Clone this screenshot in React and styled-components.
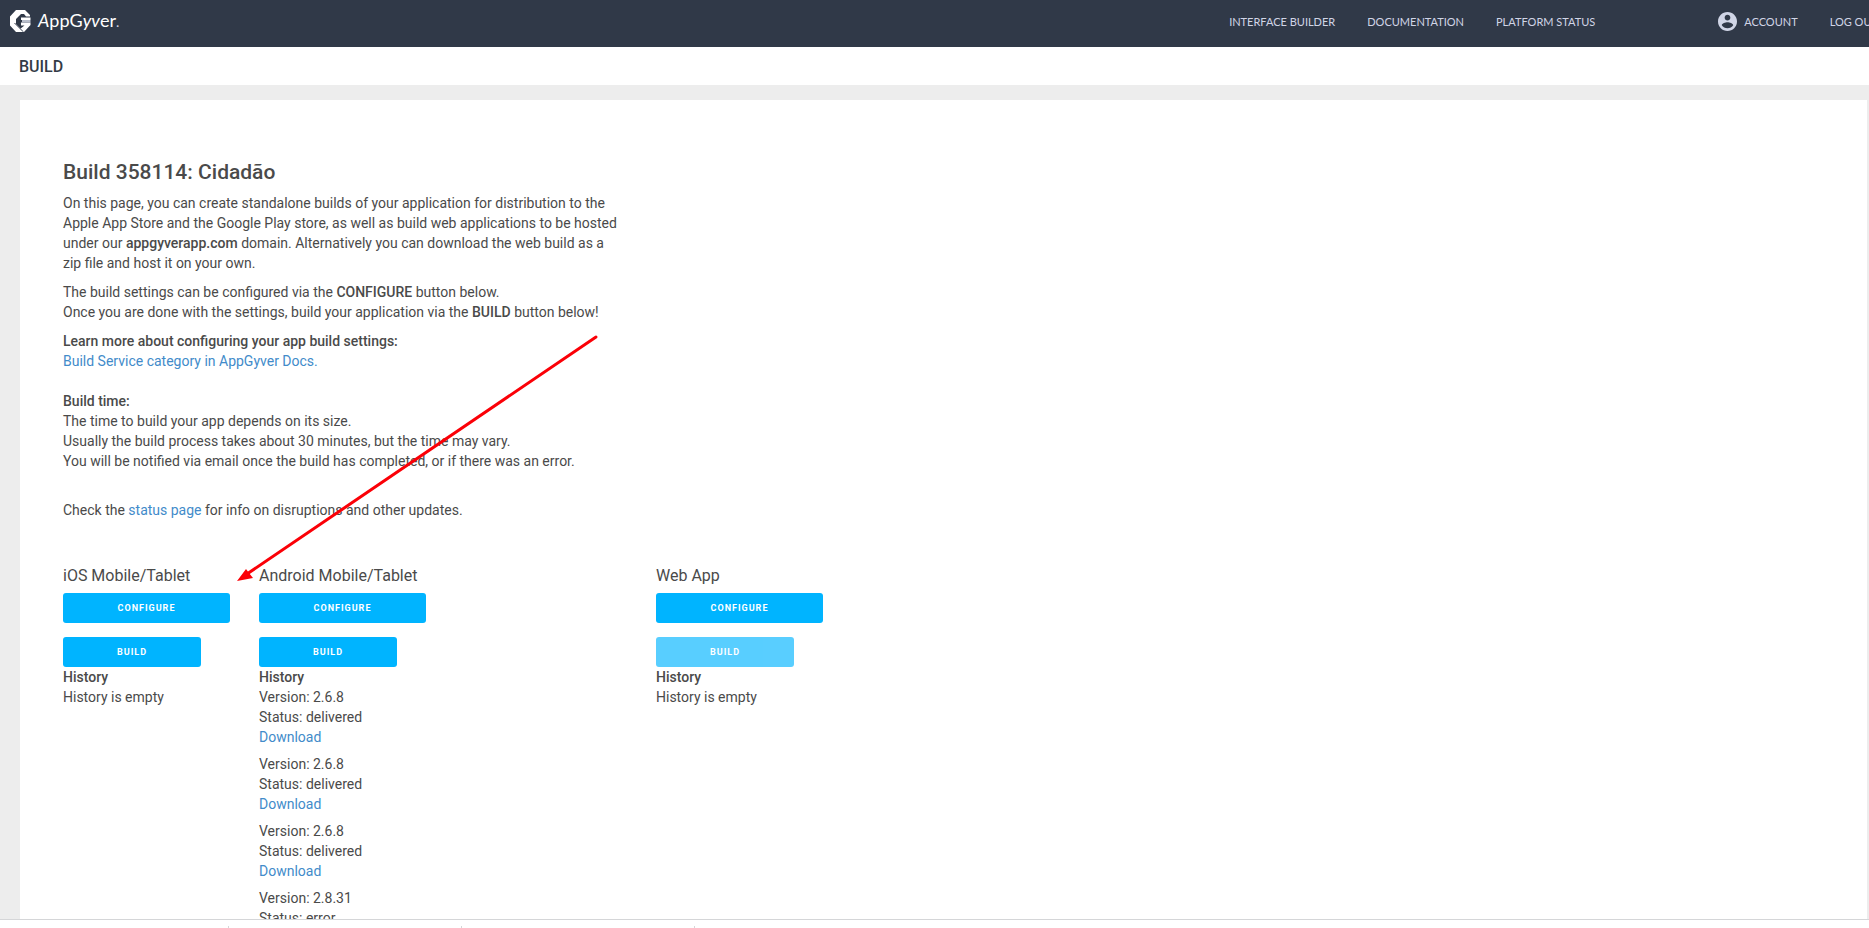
import React from 'react'
import styled, { createGlobalStyle } from 'styled-components'

const color = {
   navy: '#303948',
   nav_text: '#d0d5e6',
   title: '#333b46',
   text: '#4a4a4a',
   link: '#428bca',
   blue: '#00b4ff',
   gray_100: '#ededed',
   gray_300: '#d5d6d8',
   white: '#fff',
   red: '#fb0007',
}

const GlobalStyle = createGlobalStyle`
   * {
      box-sizing: border-box;
   }
   body {
      margin: 0;
      overflow: hidden;
      background-color: ${color.white};
      color: ${color.text};
      font-family: Roboto, Lato, sans-serif;
      font-size: 14px;
      line-height: 20px;
   }
   h1, h2, h3, p, ul {
      margin: 0;
      padding: 0;
   }
`

const Page = styled.div`
   display: flex;
   flex-direction: column;
   height: 100vh;
   overflow: hidden;
`

const Header = styled.header`
   display: flex;
   flex: none;
   justify-content: space-between;
   height: 47px;
   padding: 10px 0 0 10px;
   overflow: hidden;
   background-color: ${color.navy};
   font-family: Lato, sans-serif;
`

const Brand = styled.a`
   display: flex;
   gap: 7px;
   height: 22px;
   color: ${color.white};
   font-size: 18px;
   line-height: 20px;
   text-decoration: none;
   small {
      color: ${color.nav_text};
      font-size: 14px;
   }
`

const Nav = styled.nav`
   display: flex;
   gap: 32px;
   height: 23px;
   margin-right: -9px;
`

const NavLink = styled.a`
   display: flex;
   align-items: center;
   gap: 7px;
   margin-left: ${(props) => (props.$spaced ? '91px' : '0')};
   color: ${color.nav_text};
   font-size: 11px;
   text-decoration: none;
   text-transform: uppercase;
   white-space: nowrap;
`

const TitleBar = styled.div`
   flex: none;
   height: 38px;
   padding-left: 19px;
   h1 {
      color: ${color.title};
      font-size: 16px;
      font-weight: 500;
      line-height: 40px;
   }
`

const Content = styled.main`
   flex: 1;
   min-height: 0;
   padding: 15px 2px 0 20px;
   overflow: hidden;
   background-color: ${color.gray_100};
`

const Card = styled.section`
   position: relative;
   min-height: 100%;
   padding: 60px 43px;
   background-color: ${color.white};
`

const Heading = styled.h2`
   margin-bottom: 9px;
   font-size: 21px;
   font-weight: 500;
   line-height: 24px;
`

const Paragraph = styled.p`
   max-width: 560px;
   margin-bottom: ${(props) => props.$gap || '9px'};
   b {
      font-weight: 500;
   }
`

const Link = styled.a`
   color: ${color.link};
   text-decoration: none;
`

const Platforms = styled.div`
   display: grid;
   grid-template-columns: 196px 397px 1fr;
   align-items: start;
`

const Platform = styled.div`
   display: flex;
   flex-direction: column;
   align-items: flex-start;
   h3 {
      margin-bottom: 7px;
      font-size: 16px;
      font-weight: 400;
      line-height: 20px;
   }
   b {
      font-weight: 500;
   }
`

const Button = styled.button`
   width: ${(props) => (props.$wide ? '167px' : '138px')};
   height: 30px;
   margin-bottom: ${(props) => (props.$wide ? '14px' : '0')};
   padding: 0;
   border: 0;
   border-radius: 3px;
   background-color: ${color.blue};
   color: ${color.white};
   font-family: inherit;
   font-size: 9px;
   font-weight: 700;
   letter-spacing: 1px;
   text-transform: uppercase;
   &:disabled {
      opacity: 0.65;
   }
`

const History = styled.ul`
   list-style: none;
`

const HistoryItem = styled.li`
   display: flex;
   flex-direction: column;
   margin-bottom: 7px;
`

const ArrowDrawing = styled.svg`
   position: absolute;
   top: 232px;
   left: 215px;
   pointer-events: none;
`

const Shelf = styled.footer`
   display: flex;
   flex: none;
   height: 9px;
   padding-top: 6px;
   overflow: hidden;
   border-top: 1px solid ${color.gray_300};
`

const ShelfItem = styled.div`
   width: ${(props) => (props.$first ? '229px' : '233px')};
   border-right: 1px solid ${color.gray_300};
`

const platforms = [
   { name: 'iOS Mobile/Tablet', history: [] },
   {
      name: 'Android Mobile/Tablet',
      history: [
         { version: '2.6.8', status: 'delivered' },
         { version: '2.6.8', status: 'delivered' },
         { version: '2.6.8', status: 'delivered' },
         { version: '2.8.31', status: 'error' },
      ],
   },
   { name: 'Web App', history: [], disabled: true },
]

function Logo() {
   return (
      <svg width="21" height="22" viewBox="0 0 21 22" aria-hidden="true">
         <path fill="#fff" d="M6 0h9l5 5v1.500h-4L14 4h-3L6 9v5l7 7-1 1H6l-6-6.500v-9z" />
         <path fill="#fff" d="M11 7.500h9.500V10H11zM11 12.500h9.500V15l-6.500 7h-1l-3-3 4.500-3.500H11z" />
         <path fill="#b9bfcc" d="M12 10h8.500v2.500H12z" />
         <path stroke={color.navy} d="M4.500 13l8.500 8.500" />
      </svg>
   )
}

function AccountIcon() {
   return (
      <svg width="19" height="19" viewBox="2 2 20 20" aria-hidden="true">
         <path
            fill={color.nav_text}
            d="M12 2C6.480 2 2 6.480 2 12s4.480 10 10 10 10-4.480 10-10S17.520 2 12 2zm0 3c1.660 0 3 1.340 3 3s-1.340 3-3 3-3-1.340-3-3 1.340-3 3-3zm0 14.200c-2.500 0-4.710-1.280-6-3.220.030-1.990 4-3.080 6-3.080 1.990 0 5.970 1.090 6 3.080-1.290 1.940-3.500 3.220-6 3.220z"
         />
      </svg>
   )
}

function Arrow() {
   return (
      <ArrowDrawing width="366" height="252" viewBox="0 0 366 252" aria-hidden="true">
         <path stroke={color.red} strokeWidth="3" strokeLinecap="round" d="M12 242L361 5" />
         <path fill={color.red} d="M2 249l9-12 3 4 4 5z" />
      </ArrowDrawing>
   )
}

function PlatformColumn({ name, history, disabled }) {
   return (
      <Platform>
         <h3>{name}</h3>
         <Button type="button" $wide>
            Configure
         </Button>
         <Button type="button" disabled={disabled}>
            Build
         </Button>
         <b>History</b>
         {history.length === 0 && <span>History is empty</span>}
         <History>
            {history.map((item, index) => (
               <HistoryItem key={index}>
                  <span>Version: {item.version}</span>
                  <span>Status: {item.status}</span>
                  {item.status === 'delivered' && <Link href="#">Download</Link>}
               </HistoryItem>
            ))}
         </History>
      </Platform>
   )
}

function App() {
   return (
      <Page>
         <GlobalStyle />
         <Header>
            <Brand href="#">
               <Logo />
               <span>
                  <i>A</i>ppG<i>yv</i>er<small>.</small>
               </span>
            </Brand>
            <Nav>
               <NavLink href="#">Interface Builder</NavLink>
               <NavLink href="#">Documentation</NavLink>
               <NavLink href="#">Platform Status</NavLink>
               <NavLink href="#" $spaced>
                  <AccountIcon />
                  Account
               </NavLink>
               <NavLink href="#">Log out</NavLink>
            </Nav>
         </Header>
         <TitleBar>
            <h1>BUILD</h1>
         </TitleBar>
         <Content>
            <Card>
               <Heading>Build 358114: Cidadão</Heading>
               <Paragraph>
                  On this page, you can create standalone builds of your
                  application for distribution to the Apple App Store and the
                  Google Play store, as well as build web applications to be
                  hosted under our <b>appgyverapp.com</b> domain. Alternatively
                  you can download the web build as a zip file and host it on
                  your own.
               </Paragraph>
               <Paragraph>
                  The build settings can be configured via the <b>CONFIGURE</b>{' '}
                  button below.
                  <br />
                  Once you are done with the settings, build your application
                  via the <b>BUILD</b> button below!
               </Paragraph>
               <Paragraph $gap="29px">
                  <b>Learn more about configuring your app build settings:</b>
                  <br />
                  <Link href="#">Build Service category in AppGyver Docs.</Link>
                  <br />
                  <br />
                  <b>Build time:</b>
                  <br />
                  The time to build your app depends on its size.
                  <br />
                  Usually the build process takes about 30 minutes, but the time
                  may vary.
                  <br />
                  You will be notified via email once the build has completed,
                  or if there was an error.
               </Paragraph>
               <Paragraph $gap="46px">
                  Check the <Link href="#">status page</Link> for info on
                  disruptions and other updates.
               </Paragraph>
               <Platforms>
                  {platforms.map((platform) => (
                     <PlatformColumn key={platform.name} {...platform} />
                  ))}
               </Platforms>
               <Arrow />
            </Card>
         </Content>
         <Shelf>
            <ShelfItem $first />
            <ShelfItem />
            <ShelfItem />
         </Shelf>
      </Page>
   )
}

export default App
